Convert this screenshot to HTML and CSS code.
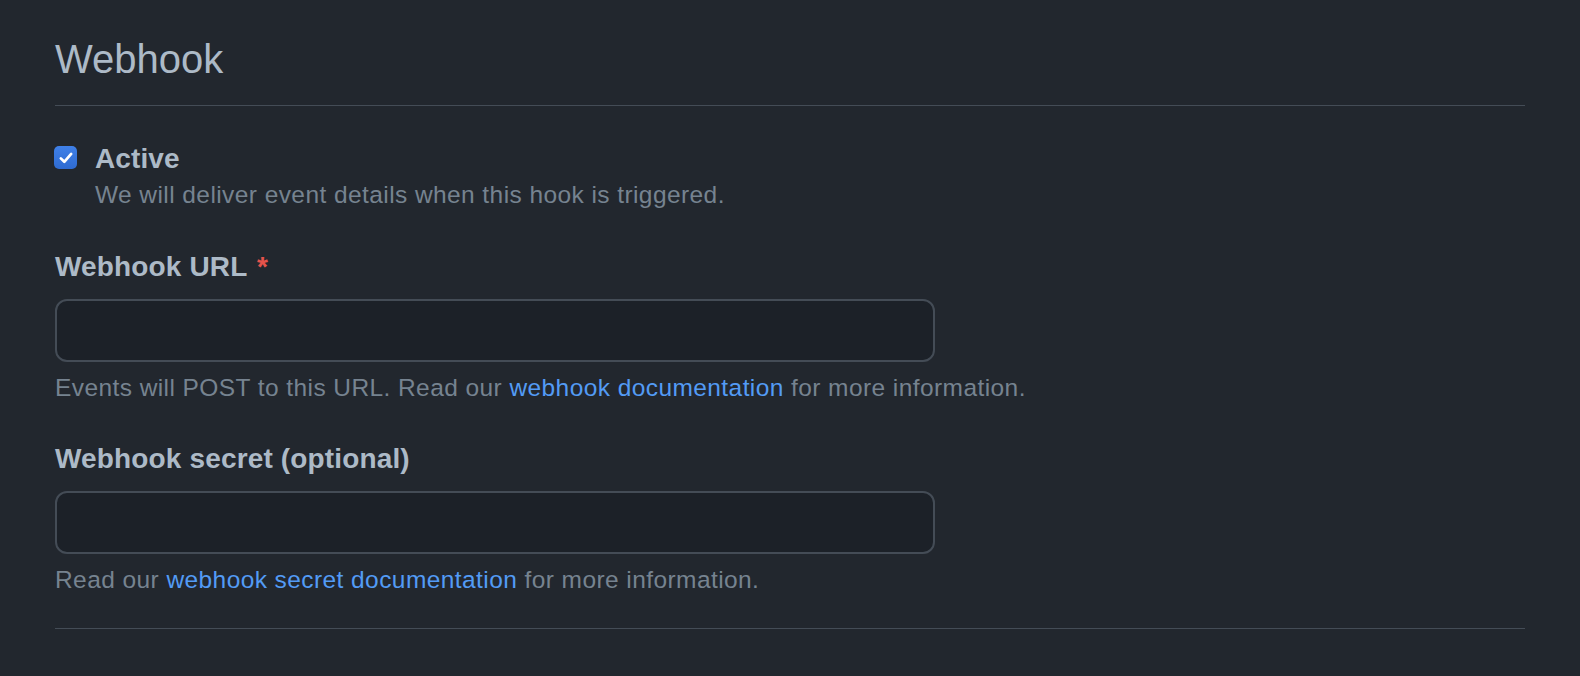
FILE: index.html
```html
<!DOCTYPE html>
<html lang="en">
<head>
<meta charset="utf-8">
<title>Webhook</title>
<link rel="stylesheet" href="styles.css">
</head>
<body>
<main class="page">
  <div class="subhead">
    <h2 class="subhead-heading">Webhook</h2>
  </div>

  <div class="check-row">
    <span class="checkbox" aria-hidden="true">
      <svg viewBox="0 0 16 16" width="18" height="18"><path d="M3.4 8.3 L6.5 11.4 L12.6 4.4" fill="none" stroke="#fff" stroke-width="2.4" stroke-linecap="round" stroke-linejoin="round"/></svg>
    </span>
    <div class="check-text">
      <div class="check-label">Active</div>
      <div class="note">We will deliver event details when this hook is triggered.</div>
    </div>
  </div>

  <div class="form-group first">
    <div class="label">Webhook URL <span class="required">*</span></div>
    <div class="input"></div>
    <div class="note">Events will POST to this URL. Read our <a class="link" href="#">webhook documentation</a> for more information.</div>
  </div>

  <div class="form-group second">
    <div class="label">Webhook secret (optional)</div>
    <div class="input"></div>
    <div class="note">Read our <a class="link" href="#">webhook secret documentation</a> for more information.</div>
  </div>

  <div class="rule"></div>
</main>
</body>
</html>
```

FILE: styles.css
```css
html, body {
  margin: 0;
  padding: 0;
  background: #22272e;
}

body {
  font-family: "Liberation Sans", Arial, sans-serif;
  color: #adbac7;
}

.page {
  width: 1470px;
  padding-left: 55px;
  padding-top: 35px;
}

.subhead {
  padding-bottom: 22px;
  border-bottom: 1px solid #444c56;
}

.subhead-heading {
  margin: 0;
  font-size: 40px;
  line-height: 48px;
  font-weight: 400;
  color: #adbac7;
}

.check-row {
  display: flex;
  align-items: flex-start;
  margin-top: 37px;
}

.checkbox {
  width: 23px;
  height: 23px;
  margin-top: 3px;
  margin-left: -1px;
  margin-right: 18px;
  border-radius: 5px;
  background: linear-gradient(#3f80e8, #2f6bd1);
  display: flex;
  align-items: center;
  justify-content: center;
  flex: none;
}

.checkbox svg {
  width: 18px;
  height: 18px;
}

.check-label {
  font-size: 28px;
  line-height: 32px;
  font-weight: 700;
  letter-spacing: 0.1px;
}

.check-text .note {
  margin-top: 4px;
}

.note {
  font-size: 24.5px;
  line-height: 32px;
  letter-spacing: 0.42px;
  color: #768390;
}

.link {
  color: #539bf5;
  text-decoration: none;
}

.form-group.first {
  margin-top: 40px;
}

.form-group.second {
  margin-top: 39px;
}

.label {
  font-size: 28px;
  line-height: 32px;
  font-weight: 700;
  letter-spacing: 0.15px;
  color: #adbac7;
}

.required {
  color: #e5534b;
  margin-left: 2px;
}

.input {
  width: 876px;
  height: 59px;
  margin-top: 16px;
  margin-bottom: 10px;
  background: #1c2128;
  border: 2px solid #444c56;
  border-radius: 12px;
}

.rule {
  margin-top: 32px;
  border-top: 1px solid #444c56;
}
```
